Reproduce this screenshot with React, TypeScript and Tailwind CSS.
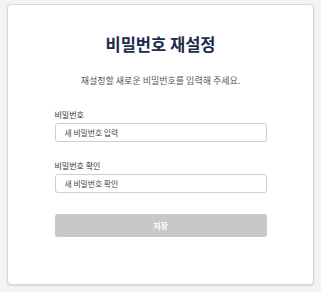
const font = {
  fontFamily: '"Noto Sans CJK KR", "Noto Sans", sans-serif',
};

export default function App() {
  return (
    <div
      className="h-[292px] w-[321px] bg-[#f2f3f5] px-[7px] pt-[4px] pb-[7px]"
      style={font}
    >
      <div className="flex h-full flex-col items-center rounded-[4px] border border-[#d6d6d6] bg-white shadow-[0_1px_2px_rgba(0,0,0,0.1)]">
        <h1 className="mt-[28px] text-[16.5px] font-bold leading-[22px] text-[#1c2b4b]">
          비밀번호 재설정
        </h1>
        <p className="mt-[20px] text-[9px] leading-[12px] text-[#555]">
          재설정할 새로운 비밀번호를 입력해 주세요.
        </p>

        <form className="mt-[22px] flex w-[212px] flex-col">
          <label className="text-[8px] leading-[12px] text-[#333]">비밀번호</label>
          <input
            type="password"
            placeholder="새 비밀번호 입력"
            className="mt-[2px] h-[19px] w-full rounded-[3px] border border-[#cfcfcf] px-[9px] text-[7.8px] placeholder:text-[#444] focus:outline-none"
          />

          <label className="mt-[18px] text-[8px] leading-[12px] text-[#333]">
            비밀번호 확인
          </label>
          <input
            type="password"
            placeholder="새 비밀번호 확인"
            className="mt-[2px] h-[19px] w-full rounded-[3px] border border-[#cfcfcf] px-[9px] text-[7.8px] placeholder:text-[#444] focus:outline-none"
          />

          <button
            type="button"
            disabled
            className="mt-[21px] h-[23px] w-full rounded-[3px] bg-[#c8c8c8] text-[8px] font-bold text-white"
          >
            저장
          </button>
        </form>
      </div>
    </div>
  );
}
